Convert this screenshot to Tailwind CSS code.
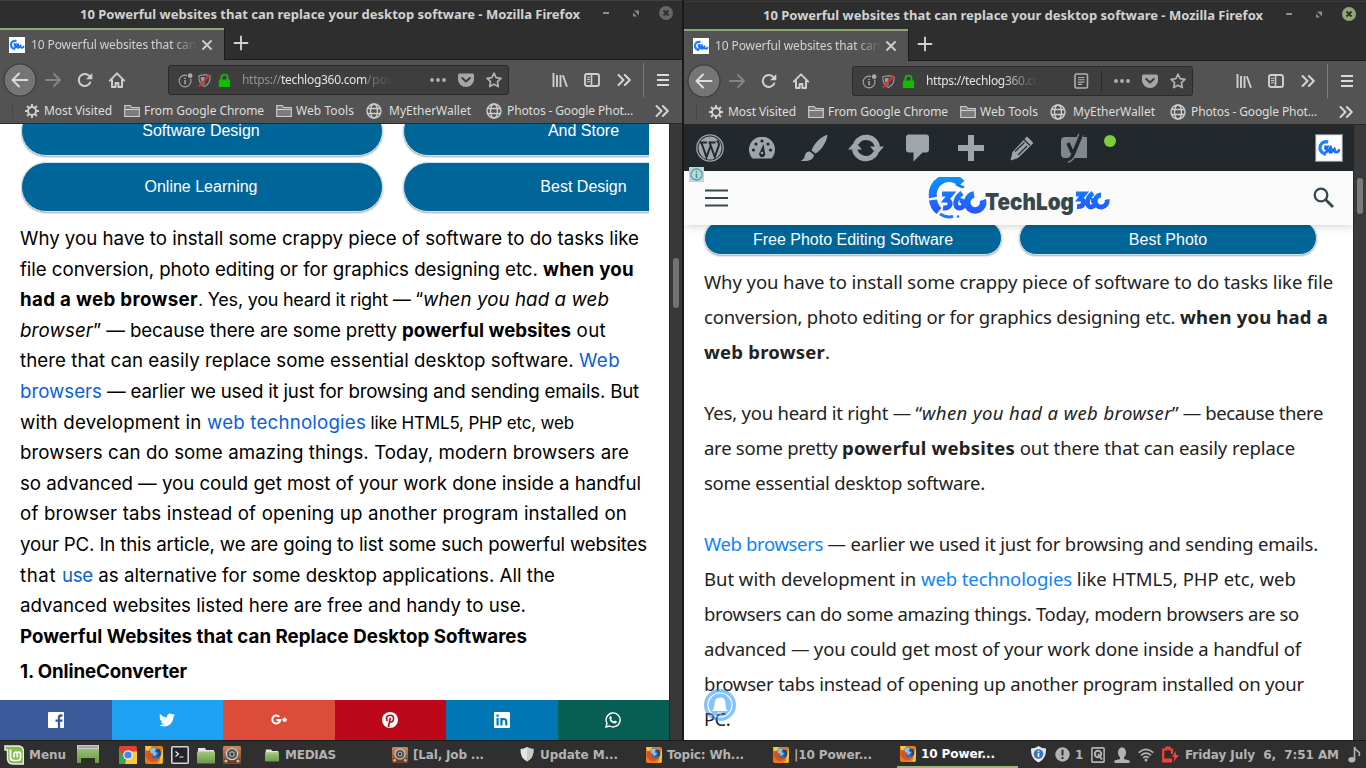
<!DOCTYPE html>
<html lang="en">
<head>
<meta charset="utf-8">
<title>10 Powerful websites that can replace your desktop software</title>
<script src="https://cdn.jsdelivr.net/npm/@tailwindcss/browser@4"></script>
</head>
<body class="w-[1366px] h-[768px] overflow-hidden bg-[#2e2e2e]">

<svg class="absolute w-0 h-0">
  <defs>
    <linearGradient id="blue" gradientUnits="userSpaceOnUse" x1="0" y1="2" x2="0" y2="38"><stop offset="0" stop-color="#0a90ff"/><stop offset="1" stop-color="#2a50ff"/></linearGradient>
    <linearGradient id="green" x1="0" y1="0" x2="0" y2="1"><stop offset="0" stop-color="#a5c77f"/><stop offset="1" stop-color="#6b994a"/></linearGradient>
    <linearGradient id="wood" x1="0" y1="0" x2="0" y2="1"><stop offset="0" stop-color="#c98a5c"/><stop offset="1" stop-color="#7d4423"/></linearGradient>
  </defs>
  <symbol id="fav" viewBox="0 0 16 16"><rect width="16" height="16" fill="#fff"/><path d="M7.500 4C3.500 3.200 1.800 5.800 2 8.300c.3 2 1.500 3.200 4 3.900" fill="none" stroke="#1b85ff" stroke-width="2.200"/><path d="M4.800 7.200h2L6 8.500c1.500.200 1.300 2.500-.8 2.200M9.800 6.800C8 8 7.800 10.900 9 10.900s1.600-2.200 0-2.200M12.300 8c-1.300.8-.8 2.800.5 2.800s2-.9 1.600-2" fill="none" stroke="#1b6dff" stroke-width="1.800"/></symbol>
  <symbol id="x" viewBox="0 0 16 16"><path d="M4 4l8 8M12 4l-8 8" stroke="#ccc" stroke-width="1.900" stroke-linecap="round"/></symbol>
  <symbol id="plus" viewBox="0 0 16 16"><path d="M8 1.500v13M1.500 8h13" stroke="#d4d0d0" stroke-width="1.900" stroke-linecap="round"/></symbol>
  <symbol id="back" viewBox="0 0 34 34"><circle cx="17" cy="17" r="16" fill="#757575" stroke="#3b3b3b" stroke-width="1.200"/><path d="M24.500 17H10M16 10.500L9.500 17l6.500 6.500" fill="none" stroke="#dcdcdc" stroke-width="2" stroke-linecap="round" stroke-linejoin="round"/></symbol>
  <symbol id="fwd" viewBox="0 0 16 16"><path d="M.800 8H15M9 2l6 6-6 6" fill="none" stroke="#858585" stroke-width="1.900" stroke-linecap="round" stroke-linejoin="round"/></symbol>
  <symbol id="reload" viewBox="0 0 16 16"><path d="M13.200 10.500A6 6 0 1 1 12.500 4.200" fill="none" stroke="#cfcfcf" stroke-width="2" stroke-linecap="round"/><path d="M15.300 1v6.300H9z" fill="#cfcfcf"/></symbol>
  <symbol id="home" viewBox="0 0 16 16"><path d="M.800 8.600L8 1.400l7.200 7.200M3 8v7h3.600v-4h2.800v4H13V8" fill="none" stroke="#cfcfcf" stroke-width="2" stroke-linecap="round" stroke-linejoin="round"/></symbol>
  <symbol id="info" viewBox="0 0 16 16"><circle cx="7.500" cy="8.500" r="6.300" fill="none" stroke="#a5a5a5" stroke-width="1.200"/><path d="M7.500 7.500v4.500M7.500 5v1.500" stroke="#a5a5a5" stroke-width="1.700"/><circle cx="13" cy="2.800" r="3.400" fill="#3d3d3d"/><circle cx="13" cy="2.800" r="2.500" fill="#aaa"/></symbol>
  <symbol id="shield" viewBox="0 0 16 16"><path d="M2 3l6-1.200L14 3c.2 5-1.500 9.500-6 11.500C3.500 12.500 1.800 8 2 3z" fill="none" stroke="#9c9c9c" stroke-width="1.200"/><path d="M4 4.500L8 4v8.500C5 11 4 8 4 4.500z" fill="#9c9c9c"/><path d="M13.500 2L2 14.500" stroke="#dd2f2f" stroke-width="2.200"/></symbol>
  <symbol id="lock" viewBox="0 0 16 16"><path d="M4.700 8V5a3.300 3.300 0 0 1 6.600 0v3" fill="none" stroke="#12bc00" stroke-width="2"/><rect x="2" y="7" width="12" height="8" rx="1" fill="#12bc00"/></symbol>
  <symbol id="dots" viewBox="0 0 16 16"><g fill="#b0b0b0"><circle cx="2" cy="8" r="1.900"/><circle cx="8" cy="8" r="1.900"/><circle cx="14" cy="8" r="1.900"/></g></symbol>
  <symbol id="pocket" viewBox="0 0 16 16"><path d="M1.500 1.500h13A1.500 1.500 0 0 1 16 3v4.500a8 7.500 0 0 1-16 0V3a1.500 1.500 0 0 1 1.500-1.500z" fill="#a6a6a6"/><path d="M4.200 6L8 9.500 11.800 6" fill="none" stroke="#3d3d3d" stroke-width="2" stroke-linecap="round" stroke-linejoin="round"/></symbol>
  <symbol id="star" viewBox="0 0 16 16"><path d="M8 1.200l2.100 4.500 4.900.6-3.600 3.400.9 4.900L8 12.200l-4.300 2.400.9-4.900L1 6.300l4.900-.6z" fill="none" stroke="#b0b0b0" stroke-width="1.700" stroke-linejoin="round"/></symbol>
  <symbol id="reader" viewBox="0 0 16 16"><rect x="2" y="1" width="12.500" height="14" rx="1.500" fill="none" stroke="#b0b0b0" stroke-width="1.600"/><path d="M5 4.500h6.500M5 6.800h6.500M5 9.100h6.500M5 11.400h4" stroke="#b0b0b0" stroke-width="1.100"/></symbol>
  <symbol id="library" viewBox="0 0 16 16"><path d="M1.500 1v14M5 3v12M8.500 3v12M10.800 3.200l4.200 11.600" stroke="#cfcfcf" stroke-width="1.900"/></symbol>
  <symbol id="sidebar" viewBox="0 0 16 16"><rect x="1" y="2" width="14" height="12" rx="2" fill="none" stroke="#cfcfcf" stroke-width="1.900"/><path d="M7.500 2v12" stroke="#cfcfcf" stroke-width="1.600"/><path d="M3 5.300h3M3 7.500h3M3 9.700h3" stroke="#cfcfcf" stroke-width="1"/></symbol>
  <symbol id="more" viewBox="0 0 16 16"><path d="M2.500 3l5 5-5 5M8.800 3l5 5-5 5" fill="none" stroke="#d4d4d4" stroke-width="2" stroke-linecap="round" stroke-linejoin="round"/></symbol>
  <symbol id="menu" viewBox="0 0 16 16"><path d="M2 3h12M2 8h12M2 13h12" stroke="#dadada" stroke-width="2"/></symbol>
  <symbol id="gear" viewBox="0 0 16 16"><circle cx="8" cy="8" r="4" fill="none" stroke="#d0d0d0" stroke-width="1.900"/><path d="M8 1v3M8 12v3M1 8h3M12 8h3M3 3l2.200 2.200M10.800 10.800L13 13M13 3l-2.200 2.200M5.200 10.800L3 13" stroke="#d0d0d0" stroke-width="1.900"/></symbol>
  <symbol id="folder" viewBox="0 0 16 16"><path d="M.700 13.500v-11h5.500l1.500 2h7.600v9z" fill="#7b7b7b" stroke="#cfcfcf" stroke-width="1.100"/><path d="M1 6.500h14" stroke="#cfcfcf"/></symbol>
  <symbol id="globe" viewBox="0 0 16 16"><g fill="none" stroke="#cfcfcf" stroke-width="1.400"><circle cx="8" cy="8" r="7"/><ellipse cx="8" cy="8" rx="3.500" ry="7"/><path d="M1.500 5.500h13M1.500 10.500h13"/></g></symbol>
  <symbol id="firefox" viewBox="0 0 18 18"><rect width="18" height="18" rx="2" fill="#e87a1c"/><path d="M0 0h7L2 8zM18 2v10l-4 5 2-8z" fill="#ffc83a"/><circle cx="9.500" cy="8" r="6.300" fill="#2c6cb3"/><path d="M5 3.500c2-2 5-2 6.500-.5L9.500 6l3 1-3 3-4-2z" fill="#8cc4ec"/><path d="M1 5c2-1 3 0 4 1.500L9 8l-3 2c1 3 5 3.500 8 1-1 5-7 6-10.500 3S0 9 1 5z" fill="#d9531a"/><path d="M10 4l4 3-2 5 4-3-1-6z" fill="#164883"/><path d="M12 17.500q5-2 5.500-9v9z" fill="#f8c62a"/></symbol>
  <symbol id="speaker" viewBox="0 0 18 18"><rect width="18" height="18" rx="1.500" fill="url(#wood)"/><rect x="1" y="13" width="16" height="4" fill="#6e3c20"/><circle cx="9" cy="8" r="6.300" fill="#ccc"/><circle cx="9" cy="8" r="5" fill="#555"/><circle cx="9" cy="8" r="2.700" fill="#aaa"/><circle cx="9" cy="8" r="1.500" fill="#333"/><circle cx="3" cy="15" r="1.600" fill="#bbb"/><circle cx="15" cy="15" r="1.600" fill="#bbb"/></symbol>
  <symbol id="gfolder" viewBox="0 0 18 18"><path d="M1 2h7l1 2h8v12H1z" fill="#e6e6e6"/><rect x="0" y="5.500" width="18" height="12" rx=".500" fill="url(#green)"/></symbol>
</svg>

<template id="chrome">
  <div class="h-[28px] flex items-center bar bg-[#2e2e2e] border-t border-[#3e3e3e] text-[13px] font-bold text-[#d2d2d2] whitespace-nowrap">
    <span data-w="500">10 Powerful websites that can replace your desktop software - Mozilla Firefox</span>
    <svg class="ml-[15px] mb-1 w-[84px] h-4 shrink-0" viewBox="0 0 84 16"><path d="M8 8h6" stroke="#999" stroke-width="1.800"/><path d="M39 5.500h5v5zM38 7.500v4h4z" fill="#8a8a8a"/><circle class="closer" cx="71" cy="8" r="7" fill="#676767"/><path d="M68.500 5.500l5 5M73.500 5.500l-5 5" stroke="#2e2e2e" stroke-width="1.800"/></svg>
  </div>
  <div class="h-[32px] flex bg-[#2e2e2e]">
    <div class="w-[224px] h-full pb-[1px] bg-[#535353] border-t-2 border-[#8fa876] flex items-center pl-[9px] text-[12px] text-[#d2d2d2]">
      <svg class="size-4"><use href="#fav"/></svg>
      <div class="ml-[6px] w-[166px] overflow-hidden whitespace-nowrap [mask-image:linear-gradient(to_right,#000_140px,transparent_166px)]"><span data-w="165">10 Powerful websites that can</span></div>
      <svg class="ml-[2px] size-4"><use href="#x"/></svg>
    </div>
    <div class="grow h-full pb-px border-l border-b border-[#1c1c1c] flex items-center pl-[8px]"><svg class="size-4"><use href="#plus"/></svg></div>
  </div>
  <div class="h-[41px] pb-px flex items-center bg-[#535353] pl-[3px]">
    <svg class="size-[34px]"><use href="#back"/></svg>
    <svg class="ml-[8px] size-4"><use href="#fwd"/></svg>
    <svg class="ml-[16px] size-4"><use href="#reload"/></svg>
    <svg class="ml-[16px] size-4"><use href="#home"/></svg>
    <div class="ml-[43px] w-[341px] h-[30px] rounded-[3px] bg-[#3e3e3e] border border-[#2b2b2b] flex items-center pl-[9px] text-[12px] shrink-0">
      <svg class="size-[15px]"><use href="#info"/></svg>
      <svg class="ml-[4px] size-[15px]"><use href="#shield"/></svg>
      <svg class="ml-[5px] size-[15px]"><use href="#lock"/></svg>
      <div class="ml-[10px] w-[155px] whitespace-nowrap overflow-hidden url"></div>
      <div class="grow flex items-center justify-end rd"></div>
      <svg class="ml-[0px] size-4"><use href="#dots"/></svg>
      <svg class="ml-[12px] size-4"><use href="#pocket"/></svg>
      <svg class="ml-[12px] mr-[6px] size-4"><use href="#star"/></svg>
    </div>
    <svg class="ml-[43px] size-4"><use href="#library"/></svg>
    <svg class="ml-[16px] size-4"><use href="#sidebar"/></svg>
    <svg class="ml-[16px] size-4"><use href="#more"/></svg>
    <div class="ml-[11px] w-px h-[34px] bg-[#7d7d7d]"></div>
    <svg class="ml-[11px] size-4"><use href="#menu"/></svg>
  </div>
  <div class="h-[23px] pb-[2px] flex items-center bg-[#535353] border-b border-[#2a2a2a] pl-[12px] text-[12px] text-[#dedede] whitespace-nowrap">
    <div class="w-px h-[14px] bg-[#474747]"></div>
    <svg class="ml-[11px] size-4"><use href="#gear"/></svg><span class="ml-[4px]" data-w="68">Most Visited</span>
    <svg class="ml-[12px] size-4"><use href="#folder"/></svg><span class="ml-[4px]" data-w="120">From Google Chrome</span>
    <svg class="ml-[12px] size-4"><use href="#folder"/></svg><span class="ml-[4px]" data-w="58">Web Tools</span>
    <svg class="ml-[12px] size-4"><use href="#globe"/></svg><span class="ml-[7px]" data-w="82">MyEtherWallet</span>
    <svg class="ml-[15px] size-4"><use href="#globe"/></svg><span class="ml-[5px]" data-w="126">Photos - Google Phot...</span>
    <svg class="ml-[21px] size-4"><use href="#more"/></svg>
  </div>
</template>

<div class="h-[740px] flex">
  <!-- left window -->
  <div class="w-[684px] h-full flex flex-col overflow-hidden border-r-2 border-[#191919] bg-[#535353]">
    <div id="c1" class="w-[682px] overflow-hidden shrink-0 font-['Noto_Sans',sans-serif]"></div>
    <div class="flex h-[616px]">
      <div class="w-[669px] bg-white flex flex-col">
        <div class="ml-[21px] w-[628px] h-[91px] overflow-hidden text-[16px] text-white font-['Liberation_Sans',sans-serif]">
          <div class="-mt-[18px] flex gap-[20px]">
            <div class="w-[362px] h-[50px] pr-[2px] shrink-0 rounded-full bg-[#006699] border border-[#d5e3ea] shadow-[0_1px_2px_rgba(0,0,0,.35)] grid place-items-center">Software Design</div>
            <div class="w-[362px] h-[50px] pr-[1px] shrink-0 rounded-full bg-[#006699] border border-[#d5e3ea] shadow-[0_1px_2px_rgba(0,0,0,.35)] grid place-items-center">And Store</div>
          </div>
          <div class="mt-[6px] flex gap-[20px]">
            <div class="w-[362px] h-[50px] pr-[2px] shrink-0 rounded-full bg-[#006699] border border-[#d5e3ea] shadow-[0_1px_2px_rgba(0,0,0,.35)] grid place-items-center">Online Learning</div>
            <div class="w-[362px] h-[50px] pr-[1px] shrink-0 rounded-full bg-[#006699] border border-[#d5e3ea] shadow-[0_1px_2px_rgba(0,0,0,.35)] grid place-items-center">Best Design</div>
          </div>
        </div>
        <div class="mt-[9px] pl-[20px] h-[476px] text-[18.7px] leading-[30.6px] text-black whitespace-pre font-['Inter',sans-serif]"><div><span data-w="619">Why you have to install some crappy piece of software to do tasks like</span></div><div><span data-w="523">file conversion, photo editing or for graphics designing etc. </span><b data-w="91">when you</b></div><div><b data-w="178">had a web browser</b><span class="text-[18px]" data-w="225">. Yes, you heard it right — “</span><i data-w="186">when you had a web</i></div><div><i data-w="73">browser</i><span data-w="309">” — because there are some pretty </span><b data-w="169">powerful websites</b><span data-w="35"> out</span></div><div><span data-w="559">there that can easily replace some essential desktop software. </span><span class="text-[#0a5fd8]" data-w="41">Web</span></div><div><span class="text-[#0a5fd8]" data-w="82">browsers</span><span data-w="537"> — earlier we used it just for browsing and sending emails. But</span></div><div><span data-w="187">with development in </span><span class="text-[#0a5fd8]" data-w="159">web technologies</span><span class="text-[17px]" data-w="208"> like HTML5, PHP etc, web</span></div><div><span data-w="609">browsers can do some amazing things. Today, modern browsers are</span></div><div><span data-w="621">so advanced — you could get most of your work done inside a handful</span></div><div><span data-w="607">of browser tabs instead of opening up another program installed on</span></div><div><span data-w="627">your PC. In this article, we are going to list some such powerful websites</span></div><div><span data-w="42">that </span><span class="text-[#0a5fd8]" data-w="31">use</span><span data-w="462"> as alternative for some desktop applications. All the</span></div><div><span data-w="506">advanced websites listed here are free and handy to use.</span></div><div><b data-w="507">Powerful Websites that can Replace Desktop Softwares</b></div><div class="mt-[5px]"><b data-w="167">1. OnlineConverter</b></div></div>
        <div class="h-[40px] grid grid-cols-6 text-white">
          <div class="bg-[#3b5998] grid place-items-center"><svg class="size-4" viewBox="0 0 16 16"><rect width="16" height="16" rx=".800" fill="#fff"/><path d="M11 16V5.500q0-2 2-2h1.500M7.500 8.700h7" fill="none" stroke="#3b5998" stroke-width="2.300"/></svg></div>
          <div class="bg-[#1da1f2] grid place-items-center"><svg class="size-4" viewBox="0 0 24 24"><path fill="#fff" d="M23.953 4.570a10 10 0 01-2.825.775 4.958 4.958 0 002.163-2.723c-.951.555-2.005.959-3.127 1.184a4.920 4.920 0 00-8.384 4.482C7.690 8.095 4.067 6.130 1.640 3.162a4.822 4.822 0 00-.666 2.475c0 1.710.870 3.213 2.188 4.096a4.904 4.904 0 01-2.228-.616v.060a4.923 4.923 0 003.946 4.827 4.996 4.996 0 01-2.212.085 4.936 4.936 0 004.604 3.417 9.867 9.867 0 01-6.102 2.105c-.390 0-.779-.023-1.170-.067a13.995 13.995 0 007.557 2.209c9.053 0 13.998-7.496 13.998-13.985 0-.210 0-.420-.015-.630A9.935 9.935 0 0024 4.590z"/></svg></div>
          <div class="bg-[#dd4b39] grid place-items-center"><svg class="size-4" viewBox="0 0 16 16"><path d="M8.300 4.800A4 4 0 1 0 9.300 8H5.500M11.300 7.800h4.600M13.600 5.500v4.600" fill="none" stroke="#fff" stroke-width="2"/></svg></div>
          <div class="bg-[#bd081c] grid place-items-center"><svg class="size-4" viewBox="0 0 16 16"><circle cx="8" cy="8" r="8" fill="#fff"/><path d="M5.300 9C3 5 6 3.200 8.300 3.200c4.500 0 4 6.800.600 6.800-1 0-1.600-.700-1.600-.700M8.400 5.800L6.300 15" fill="none" stroke="#bd081c" stroke-width="1.600"/></svg></div>
          <div class="bg-[#0077b5] grid place-items-center"><svg class="size-4" viewBox="0 0 16 16"><rect width="16" height="16" rx="1" fill="#fff"/><path d="M3.600 6v7.500M3.600 2.400v2.300M7.400 13.500V6M7.400 9q.300-2 2.500-2T12.300 9.500v4" fill="none" stroke="#0077b5" stroke-width="2.200"/></svg></div>
          <div class="bg-[#075e54] grid place-items-center"><svg class="size-4" viewBox="0 0 16 16"><path d="M1 15l1-3.700A7 7 0 1 1 4.700 14z" fill="none" stroke="#fff" stroke-width="1.400"/><path d="M5 4.200c.8-.6 1.300 0 1.900 1.800l-.700 1q1 2 2.900 2.600l1-1c1.800.700 2 1 1.600 1.900-.800 1.400-2.700 1.200-4.700 0S3.500 6 5 4.200z" fill="#fff"/></svg></div>
        </div>
      </div>
      <div class="grow bg-[#383838] border-l border-[#262626] pt-[134px] pl-[3px]"><div class="w-[6px] h-[50px] rounded-full bg-[#727272]"></div></div>
    </div>
  </div>

  <!-- right window -->
  <div class="w-[682px] h-full flex flex-col overflow-hidden bg-[#2e2e2e] pt-px">
    <div id="c2" class="w-[682px] overflow-hidden shrink-0 font-['Noto_Sans',sans-serif]"></div>
    <div class="flex h-[615px]">
      <div class="relative w-[669px] bg-white flex flex-col overflow-hidden">
        <div class="h-[46px] shrink-0 bg-[#23282d] flex items-center pl-[12px]">
          <svg class="size-[28px]" viewBox="0 0 28 28"><circle cx="14" cy="14" r="13.200" fill="none" stroke="#a0a5aa" stroke-width="1.300"/><circle cx="14" cy="14" r="11.500" fill="#a0a5aa"/><path d="M4 8.500h7M12.500 8.500h7M5.500 9l5 14L14.500 12M13.800 9l5 14 4-11.500q.500-3-2-5" fill="none" stroke="#23282d" stroke-width="2"/></svg>
          <svg class="ml-[25px] w-[26px] h-[22px]" viewBox="0 0 26 22"><path d="M3.500 21.500A13 13 0 1 1 22.500 21.500z" fill="#a0a5aa"/><g fill="#23282d"><circle cx="4.500" cy="13" r="1.600"/><circle cx="7" cy="7" r="1.600"/><circle cx="13" cy="4" r="1.600"/><circle cx="19" cy="7" r="1.600"/><circle cx="21.500" cy="13" r="1.600"/><path d="M14.500 7l1.500 9a3 3 0 1 1-5-1z"/></g><circle cx="13" cy="16" r="1.300" fill="#a0a5aa"/></svg>
          <svg class="ml-[25px] w-[28px] h-[28px]" viewBox="0 0 28 28"><path d="M27.500.800C22 2 14 9 11.500 16.500l4 3C22 16 27 7 27.500.800zM10 17.500c-4-.500-5 3-5.500 5.500-.500 2-2 3-4 3.500 5 1.500 13 .500 13.500-5.500z" fill="#a0a5aa"/></svg>
          <svg class="ml-[20px] w-[36px] h-[28px]" viewBox="0 0 36 28"><path d="M8 9.500A11.500 11.500 0 0 1 29.500 13M28 18.500A11.500 11.500 0 0 1 6.500 15" fill="none" stroke="#a0a5aa" stroke-width="5.500"/><path d="M22 12.500h14l-7 8zM0 15.500h14l-7-8z" fill="#a0a5aa"/></svg>
          <svg class="ml-[22px] w-[23px] h-[28px]" viewBox="0 0 23 28"><path d="M3 0.500h17a3 3 0 0 1 3 3v12a3 3 0 0 1-3 3h-3.500L7.500 27.500v-9H3a3 3 0 0 1-3-3v-12a3 3 0 0 1 3-3z" fill="#a0a5aa"/></svg>
          <svg class="ml-[29px] w-[26px] h-[26px]" viewBox="0 0 26 26"><path d="M13 0v26M0 13h26" stroke="#a0a5aa" stroke-width="6"/></svg>
          <svg class="ml-[26px] w-[24px] h-[26px]" viewBox="0 0 24 26"><path d="M17 1.500l5.500 5.500q1 1 0 2L8 23 .500 25.500 2.500 17 16 2.500z" fill="#a0a5aa"/><path d="M14 4.500l6 6M5 16.500L14.500 7.500M8 20l9-9" stroke="#23282d" stroke-width="1.300"/></svg>
          <svg class="ml-[26px] w-[28px] h-[30px]" viewBox="0 0 28 30"><path d="M5 4h22v21H5a4 4 0 0 1-4-4V8a4 4 0 0 1 4-4z" fill="#82878c"/><path d="M8 10l4.500 10M21 1.500L13.500 20.500Q11.500 26 7.500 27" fill="none" stroke="#82878c" stroke-width="6"/><path d="M8 10l4.500 10M21.500 1L13.500 20.500Q11.500 26 7 27" fill="none" stroke="#23282d" stroke-width="3.600"/></svg>
          <div class="ml-[16px] mb-[14px] size-[12px] rounded-full bg-[#7ad03a]"></div>
          <div class="ml-[199px] size-[28px] border border-[#82878c] bg-[#eee] p-px"><svg class="size-full"><use href="#fav"/></svg></div>
        </div>
        <div class="relative z-10 h-[54px] shrink-0 bg-[#fafafa] shadow-[0_2px_8px_rgba(0,0,0,.16)] flex items-center pl-[21px]">
          <svg class="w-[23px] h-[18px]" viewBox="0 0 23 18"><path d="M0 1.500h24M0 9h24M0 16.500h24" stroke="#37474f" stroke-width="2"/></svg>
          <svg class="ml-[200px] w-[182px] h-[42px]" viewBox="0 0 182 42">
            <path d="M33.500 6.500A16.500 16.500 0 0 0 5 20.500M5 23A17 17 0 0 0 11 34" fill="none" stroke="url(#blue)" stroke-width="8"/>
            <path d="M12 37Q18 41 25 39.500M28 7l6 3" fill="none" stroke="#1b7bff" stroke-width="3"/><circle cx="30" cy="39.500" r="1.300" fill="#1b7bff"/><circle cx="35" cy="10" r="1.300" fill="#1b7bff"/>
            <path d="M14 17h9l-5 6c6 0 6 9-3 8M34 16c-8 6-8 15-2.500 15s6-8 0-7.500" fill="none" stroke="url(#blue)" stroke-width="5"/>
            <path d="M46 17.500a8 8 0 1 0 8.800 5.500" fill="none" stroke="url(#blue)" stroke-width="6.500"/>
            <text x="57" y="33" textLength="89" lengthAdjust="spacingAndGlyphs" font-family="Inter" font-weight="900" font-size="23" fill="#37474f">TechLog</text>
            <path d="M148 17h8l-4 5c5 0 5 8-3 7.500M165 16c-7 5-7 14-2 14s5-7 0-6.500M173 18a6 6 0 1 0 6 4.500" fill="none" stroke="url(#blue)" stroke-width="4.800"/>
          </svg>
          <svg class="ml-[203px] size-[22px]" viewBox="0 0 22 22"><circle cx="8" cy="8" r="6.300" fill="none" stroke="#37474f" stroke-width="2.300"/><path d="M12.500 12.500l7.500 7.500" stroke="#37474f" stroke-width="2.800"/></svg>
        </div>
        <div class="-mt-[4px] pl-[20px] flex gap-[17px] text-[16px] text-white font-['Liberation_Sans',sans-serif]">
          <div class="w-[298px] h-[34px] rounded-full bg-[#006699] border border-[#d5e3ea] shadow-[0_1px_2px_rgba(0,0,0,.35)] flex justify-center pt-[6px]">Free Photo Editing Software</div>
          <div class="w-[298px] h-[34px] rounded-full bg-[#006699] border border-[#d5e3ea] shadow-[0_1px_2px_rgba(0,0,0,.35)] flex justify-center pt-[6px]">Best Photo</div>
        </div>
        <div class="mt-[9px] pl-[20px] text-[18.5px] leading-[35px] text-[#222] whitespace-pre flex flex-col gap-[26px] font-['Noto_Sans',sans-serif]"><div><div><span data-w="629">Why you have to install some crappy piece of software to do tasks like file</span></div><div><span data-w="476">conversion, photo editing or for graphics designing etc. </span><b data-w="148">when you had a</b></div><div><b data-w="121">web browser</b>.</div></div><div><div><span data-w="218">Yes, you heard it right — “</span><i data-w="250">when you had a web browser</i><span data-w="151">” — because there</span></div><div><span data-w="138">are some pretty </span><b data-w="173">powerful websites</b><span data-w="280"> out there that can easily replace</span></div><div><span data-w="281">some essential desktop software.</span></div></div><div><div><span class="text-[#0a84ff]" data-w="119">Web browsers</span><span data-w="495"> — earlier we used it just for browsing and sending emails.</span></div><div><span data-w="217">But with development in </span><span class="text-[#0a84ff]" data-w="151">web technologies</span><span data-w="224"> like HTML5, PHP etc, web</span></div><div><span data-w="595">browsers can do some amazing things. Today, modern browsers are so</span></div><div><span data-w="597">advanced — you could get most of your work done inside a handful of</span></div><div><span data-w="600">browser tabs instead of opening up another program installed on your</span></div><div><span data-w="26">PC.</span></div></div></div>
        <div class="absolute z-20 left-[5px] top-[42px] size-[15px] bg-[#cfcfcf] grid place-items-center"><svg class="size-[13px]" viewBox="0 0 13 13"><circle cx="6.500" cy="6.500" r="5.600" fill="none" stroke="#00aecd" stroke-width="1.100"/><path d="M6.500 5.500v4.500M6.500 3v1.500" stroke="#00aecd" stroke-width="1.500"/></svg></div>
        <svg class="absolute z-20 left-[19px] top-[563px] size-[34px] opacity-50" viewBox="0 0 34 34"><circle cx="17" cy="17" r="16" fill="#0a84ff"/><circle cx="17" cy="17" r="12" fill="none" stroke="#fff" stroke-width="1.200"/><path d="M9 23q2.500-2 2.500-7.500t5.500-6 5.500 6T25 23zM14.500 24.500h5q-.5 2-2.500 2t-2.500-2z" fill="#fff"/></svg>
      </div>
      <div class="grow bg-[#3a3a3a] border-l border-[#262626] pt-[53px] pl-[3px]"><div class="w-[6px] h-[36px] rounded-full bg-[#7b7b7b]"></div></div>
    </div>
  </div>
</div>

<!-- panel -->
<div class="h-[28px] flex items-center bg-[#2f2f2f] border-t border-[#1c1c1c] pl-[4px] text-[12px] font-bold text-[#b3b3b3] whitespace-nowrap font-['DejaVu_Sans',sans-serif]">
  <svg class="size-[20px]" viewBox="0 0 20 20"><path d="M1 1h14q4.500.500 4.500 5v13H9Q3.500 19 3.500 13V5H1z" fill="#84bd4c" stroke="#eee" stroke-width="1.400"/><path d="M6.500 4.500v8q0 3 3 3h4q3 0 3-3V9q0-1.800-1.600-1.800T13.300 9v3.500M13.300 9q0-1.800-1.600-1.800T10 9v3.500" fill="none" stroke="#fff" stroke-width="1.700"/></svg>
  <span class="ml-[5px]" data-w="37">Menu</span>
  <svg class="ml-[11px] w-[22px] h-[19px]" viewBox="0 0 22 19"><rect width="22" height="18" fill="url(#green)"/><rect width="22" height="4" fill="#c9c9c9"/><path d="M1 2h20" stroke="#888" stroke-width="1"/><path d="M4 18v-5h14v5z" fill="#293320"/></svg>
  <svg class="ml-[20px] size-[18px]" viewBox="0 0 18 18"><rect width="18" height="18" rx="1.500" fill="#e34133"/><path d="M0 3l7 11-2 4H0z" fill="#3da552"/><path d="M9 5.500h9V18H6z" fill="#fcc934"/><circle cx="9" cy="9" r="4.800" fill="#f2f2f2"/><circle cx="9" cy="9" r="3.600" fill="#4285f4"/></svg>
  <svg class="ml-[8px] size-[18px]"><use href="#firefox"/></svg>
  <svg class="ml-[8px] size-[18px]" viewBox="0 0 18 18"><rect x=".800" y=".800" width="16.400" height="16.400" rx="1" fill="#22222b" stroke="#d5d5d5" stroke-width="1.600"/><path d="M4.500 5.500l3 2.500-3 2.500M8.500 11h4" fill="none" stroke="#eee" stroke-width="1.200"/></svg>
  <svg class="ml-[8px] size-[18px]"><use href="#gfolder"/></svg>
  <svg class="ml-[8px] size-[18px]"><use href="#speaker"/></svg>
  <svg class="ml-[24px] size-[14px]"><use href="#gfolder"/></svg><span class="ml-[6px]" data-w="51">MEDIAS</span>
  <svg class="ml-[56px] size-[16px]"><use href="#speaker"/></svg><span class="ml-[5px]" data-w="71">[Lal, Job ...</span>
  <svg class="ml-[36px] w-[14px] h-[15px]" viewBox="0 0 14 15"><path d="M7 0q3 2 6.500 2 .500 9-6.500 12.500Q0 11 .500 2 4 2 7 0z" fill="#e4e4e4"/><path d="M7 0q3 2 6.500 2 .500 9-6.500 12.500z" fill="#c9c9c9"/></svg><span class="ml-[6px]" data-w="78">Update M...</span>
  <svg class="ml-[28px] size-[16px]"><use href="#firefox"/></svg><span class="ml-[5px]" data-w="77">Topic: Wh...</span>
  <svg class="ml-[29px] size-[16px]"><use href="#firefox"/></svg><span class="ml-[5px]" data-w="78">|10 Power...</span>
  <div class="ml-[25px] w-[121px] h-full border-b-2 border-[#9ab87c] flex items-center pl-[3px] text-white"><svg class="size-[16px]"><use href="#firefox"/></svg><span class="ml-[5px]" data-w="74">10 Power...</span></div>
  <svg class="ml-[12px] size-[17px]" viewBox="0 0 17 17"><path d="M8.500 0q3.500 2.500 7.500 2.500.500 10-7.500 14Q.500 12.500 1 2.500 5 2.500 8.500 0z" fill="#e8e8e8"/><circle cx="8.500" cy="8" r="4.800" fill="#3a76c0"/><path d="M8.500 7v4M8.500 4.700v1.500" stroke="#fff" stroke-width="1.500"/></svg>
  <svg class="ml-[8px] size-[15px]" viewBox="0 0 15 15"><circle cx="7.500" cy="7.500" r="7.200" fill="#b3b3b3"/><path d="M7.500 2.800v5.700M7.500 10v2" stroke="#2f2f2f" stroke-width="2"/></svg>
  <span class="ml-[5px]" data-w="8">1</span>
  <svg class="ml-[8px] w-[14px] h-[16px]" viewBox="0 0 14 16"><rect x=".900" y=".900" width="12.200" height="14.200" rx=".800" fill="none" stroke="#b3b3b3" stroke-width="1.600"/><circle cx="7" cy="7" r="3.200" fill="none" stroke="#b3b3b3" stroke-width="2"/><path d="M7 7l4 5.500" stroke="#b3b3b3" stroke-width="2"/></svg>
  <svg class="ml-[9px] size-[16px]" viewBox="0 0 16 16"><ellipse cx="8" cy="5.500" rx="4" ry="5.300" fill="#b3b3b3"/><path d="M6 9h4v3l5.500 1.500V16H.500v-2.500L6 12z" fill="#b3b3b3"/></svg>
  <svg class="ml-[8px] w-[16px] h-[14px]" viewBox="0 0 16 14"><g fill="none" stroke="#b3b3b3" stroke-width="1.700"><path d="M.700 4.700q7.300-6.500 14.600 0M3 7.300q5-4.300 10 0M5.200 9.800q2.800-2.200 5.600 0"/></g><circle cx="8" cy="12" r="1.500" fill="#b3b3b3"/></svg>
  <svg class="ml-[8px] size-[17px]" viewBox="0 0 17 17"><path d="M10 8V3.500H7.500v-2h-3v2H1.200v11.800H10" fill="none" stroke="#f9403a" stroke-width="2.200"/><path d="M1 12.500h9V16H1zM13.500 5l-3.500 6h2.500l-1 5 5.500-7h-3z" fill="#f9403a"/></svg>
  <span class="ml-[6px] whitespace-pre" data-w="154">Friday July  6,  7:51 AM</span>
  <svg class="ml-[9px] w-[13px] h-[17px]" viewBox="0 0 13 17"><ellipse cx="3.800" cy="13.800" rx="3.500" ry="2.700" fill="#b3b3b3"/><path d="M6.500 14V1q1 3.500 3.500 4.500T11 10" fill="none" stroke="#b3b3b3" stroke-width="1.600"/></svg>
</div>

<script>
  const tpl = document.getElementById('chrome');
  const c1 = document.getElementById('c1'), c2 = document.getElementById('c2');
  c1.append(tpl.content.cloneNode(true));
  c2.append(tpl.content.cloneNode(true));
  c1.querySelector('.bar').classList.add('pl-[80px]');
  c2.querySelector('.bar').classList.add('pl-[79px]');
  c1.querySelector('.url').innerHTML = '<div class="text-[#e4e4e4] [mask-image:linear-gradient(to_right,#000_120px,transparent_152px)]"><span class="text-[#929292]" data-w="39">https://</span><span data-w="86">techlog360.com</span><span class="text-[#929292]" data-w="30">/pow</span></div>';
  c2.querySelector('.url').innerHTML = '<div class="text-[#e4e4e4] [mask-image:linear-gradient(to_right,#000_76px,transparent_112px)]"><span data-w="39">https://</span><span data-w="75">techlog360.co</span></div>';
  c2.querySelector('.url').classList.replace('w-[155px]', 'w-[120px]');
  c2.querySelector('.rd').innerHTML = '<svg class="size-4"><use href="#reader"/></svg><div class="ml-[12px] mr-[12px] w-px h-[22px] bg-[#2a2a2a]"></div>';
  c2.querySelector('.closer').setAttribute('fill', '#8fa876');
  const runs = [...document.querySelectorAll('[data-w]')];
  function fit() {
    runs.forEach(el => {
      el.style.display = 'inline-block';
      el.style.whiteSpace = 'pre';
      el.style.flexShrink = 0;
      el.style.width = 'max-content';
      el.style.letterSpacing = '0px';
    });
    const natural = runs.map(el => el.getBoundingClientRect().width);
    runs.forEach((el, i) => {
      const w = +el.dataset.w;
      el.style.letterSpacing = (w - natural[i]) / el.textContent.length + 'px';
      el.style.width = w + 'px';
    });
  }
  fit();
  addEventListener('DOMContentLoaded', fit);
  addEventListener('load', () => { fit(); requestAnimationFrame(fit); });
  document.fonts.ready.then(fit);
  document.fonts.addEventListener('loadingdone', fit);
  [30, 100, 200, 400].forEach(t => setTimeout(fit, t));
</script>
</body>
</html>
